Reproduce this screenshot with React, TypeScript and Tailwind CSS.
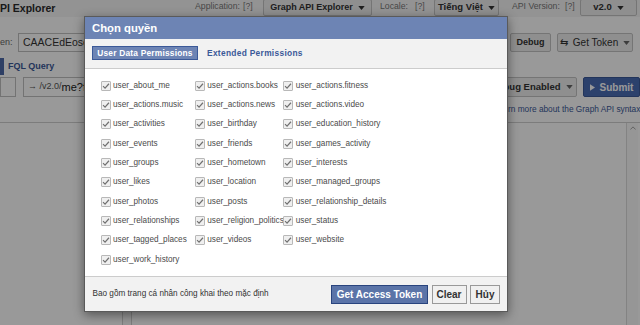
import React from "react";

const rows: string[][] = [
  ["user_about_me", "user_actions.books", "user_actions.fitness"],
  ["user_actions.music", "user_actions.news", "user_actions.video"],
  ["user_activities", "user_birthday", "user_education_history"],
  ["user_events", "user_friends", "user_games_activity"],
  ["user_groups", "user_hometown", "user_interests"],
  ["user_likes", "user_location", "user_managed_groups"],
  ["user_photos", "user_posts", "user_relationship_details"],
  ["user_relationships", "user_religion_politics", "user_status"],
  ["user_tagged_places", "user_videos", "user_website"],
  ["user_work_history"],
];

function Check() {
  return (
    <span className="w-[10px] h-[10px] shrink-0 border border-[#b8b8b8] bg-[#efefef] rounded-[1px] flex items-center justify-center">
      <svg viewBox="0 0 10 10" className="w-[8px] h-[8px]">
        <path d="M1.3 5.2 L3.8 7.6 L8.7 2.2" stroke="#707070" strokeWidth="1.5" fill="none" />
      </svg>
    </span>
  );
}

function Caret({ color = "#333" }: { color?: string }) {
  return (
    <svg viewBox="0 0 8 5" className="w-[7px] h-[4px]">
      <path d="M0 0 L8 0 L4 5 Z" fill={color} />
    </svg>
  );
}

function GrayBtn({ children, className = "" }: { children: React.ReactNode; className?: string }) {
  return (
    <div
      className={
        "h-full flex items-center justify-center gap-[5px] border border-[#c4c4c4] bg-[#eeeeee] rounded-[2px] text-[#333] font-bold text-[9px] whitespace-nowrap " +
        className
      }
    >
      {children}
    </div>
  );
}

export default function App() {
  const items = rows.flat();
  return (
    <div className="relative w-[640px] h-[325px] overflow-hidden bg-white font-['Liberation_Sans',Arial,sans-serif]">
      {/* background page */}
      <div className="flex flex-col h-full">
        {/* top bar */}
        <div className="h-[17px] flex items-start bg-[#f6f6f6]">
          <div className="w-[195px] h-[17px] flex items-center text-[10.5px] font-bold text-[#2a2a2a] leading-none">
            PI Explorer
          </div>
          <div className="flex items-start h-[17px] -mt-[1px] text-[8.7px] text-[#777]">
            <span className="w-[48px] h-[15px] flex items-center">Application:</span>
            <span className="w-[20px] h-[15px] flex items-center">[?]</span>
            <GrayBtn className="w-[109px] !h-[17px]">
              Graph API Explorer <Caret />
            </GrayBtn>
            <span className="ml-[8px] w-[35px] h-[15px] flex items-center">Locale:</span>
            <span className="w-[19px] h-[15px] flex items-center">[?]</span>
            <GrayBtn className="w-[65px] !h-[17px]">
              <span className="text-[9.5px]">Tiếng Việt</span> <Caret />
            </GrayBtn>
            <span className="ml-[13px] w-[53px] h-[15px] flex items-center">API Version:</span>
            <span className="w-[15px] h-[15px] flex items-center">[?]</span>
            <GrayBtn className="w-[57px] !h-[17px]">
              <span className="text-[9.5px]">v2.0</span> <Caret />
            </GrayBtn>
          </div>
        </div>

        {/* token row */}
        <div className="mt-[16px] h-[19px] flex justify-between">
          <div className="flex items-center h-full">
            <span className="w-[18px] text-[9px] text-[#666]">en:</span>
            <div className="w-[140px] h-full border border-[#c0c0c0] bg-white flex items-center pl-[4px] text-[10.5px] text-[#333] whitespace-nowrap">
              CAACEdEose0ZAhx
            </div>
          </div>
          <div className="flex h-full gap-[6px] mr-[7px]">
            <GrayBtn className="w-[41px]">Debug</GrayBtn>
            <GrayBtn className="w-[76px] !font-normal !text-[10px]">
              <span className="font-normal">⇆</span> Get Token <Caret color="#666" />
            </GrayBtn>
          </div>
        </div>

        {/* tabs row */}
        <div className="mt-[6px] h-[17px] flex items-center">
          <div className="w-[4px] h-full bg-[#4d6aa8]" />
          <span className="ml-[4px] text-[9px] font-bold text-[#3b5998]">FQL Query</span>
        </div>

        {/* query row */}
        <div className="mt-[2px] h-[20px] flex justify-between">
          <div className="flex h-full">
            <div className="w-[16px] h-full border border-[#c0c0c0] bg-white" />
            <div className="ml-[7px] w-[130px] h-full border border-[#c0c0c0] bg-white flex items-center pl-[4px] whitespace-nowrap">
              <span className="text-[9px] text-[#555]">→ /v2.0/</span>
              <span className="text-[11px] text-[#222]">me?fields=id</span>
            </div>
          </div>
          <div className="flex h-full gap-[6px]">
            <GrayBtn className="w-[90px] !text-[9.5px]">
              Debug Enabled <Caret color="#666" />
            </GrayBtn>
            <div className="w-[57px] h-full flex items-center justify-center gap-[5px] bg-[#4a6db5] border border-[#3b5998] rounded-[2px] text-white font-bold text-[10px]">
              <svg viewBox="0 0 6 8" className="w-[5px] h-[7px]">
                <path d="M0 0 L6 4 L0 8 Z" fill="#fff" />
              </svg>
              Submit
            </div>
          </div>
        </div>

        {/* learn more */}
        <div className="h-[26px] border-b border-[#cfcfcf] flex items-center pl-[508px] text-[8.3px] text-[#3b5998] whitespace-nowrap">
          rn more about the Graph API syntax
        </div>

        {/* panes */}
        <div className="flex-1 flex">
          <div className="w-[123px] border-r border-[#d0d0d0]" />
          <div className="w-[9px] border-r border-[#d0d0d0] bg-[#fafafa]" />
          <div className="flex-1" />
          <div className="w-[12px] mr-[2px] border-l border-[#dadada] bg-[#fbfbfb] flex justify-center pt-[3px]">
            <svg viewBox="0 0 8 5" className="w-[6px] h-[4px]">
              <path d="M0.5 4.5 L4 1 L7.5 4.5" stroke="#999" strokeWidth="1.2" fill="none" />
            </svg>
          </div>
        </div>
      </div>

      {/* overlay */}
      <div className="absolute inset-0 bg-black/40" />

      {/* dialog */}
      <div className="absolute left-[84px] top-[16px] w-[424px] h-[296px] border border-[#5a5a5a] bg-white shadow-[0_3px_10px_rgba(0,0,0,0.45)] flex flex-col">
        <div className="h-[22px] bg-[#6d84b4] flex items-center pl-[7px] text-white font-bold text-[11.3px] shrink-0">
          Chọn quyền
        </div>
        <div className="h-[30px] shrink-0 bg-[#f2f2f2] border-b border-[#cccccc] flex items-start pt-[7px] pl-[7px]">
          <div className="h-[14px] w-[106px] flex items-center justify-center bg-[#6d84b4] border border-[#3b5998] text-white font-bold text-[8.4px] tracking-[0.2px]">
            User Data Permissions
          </div>
          <div className="h-[14px] ml-[9px] flex items-center text-[#3b5998] font-bold text-[8.4px] tracking-[0.3px]">
            Extended Permissions
          </div>
        </div>
        <div className="flex-1 pt-[7px] pl-[15.5px]">
          <div className="grid grid-cols-[94.3px_88.5px_1fr] auto-rows-[19.35px]">
            {items.map((name) => (
              <div key={name} className="flex items-center gap-[2.5px] whitespace-nowrap text-[8.2px] text-[#4a4a4a]">
                <Check />
                <span>{name}</span>
              </div>
            ))}
          </div>
        </div>
        <div className="h-[35px] shrink-0 bg-[#f2f2f2] border-t border-[#cccccc] flex items-center justify-between pl-[7.5px] pr-[7px]">
          <span className="text-[8.2px] text-[#333]">Bao gồm trang cá nhân công khai theo mặc định</span>
          <div className="flex h-[19px] gap-[3.5px]">
            <div className="w-[97px] h-full flex items-center justify-center bg-[#5b74a8] border border-[#29447e] text-white font-bold text-[10px]">
              Get Access Token
            </div>
            <div className="w-[35px] h-full flex items-center justify-center bg-[#f0f0f0] border border-[#999] text-[#333] font-bold text-[10px]">
              Clear
            </div>
            <div className="w-[30px] h-full flex items-center justify-center bg-[#f0f0f0] border border-[#999] text-[#333] font-bold text-[10px]">
              Hủy
            </div>
          </div>
        </div>
      </div>
    </div>
  );
}
